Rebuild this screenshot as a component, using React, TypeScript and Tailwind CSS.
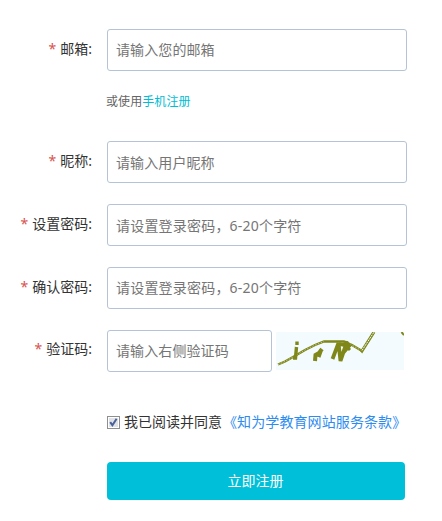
import { useState } from "react";
import type { ReactNode } from "react";

type FieldProps = {
  label: string;
  placeholder: string;
  type?: string;
  inputClass?: string;
  labelClass?: string;
  children?: ReactNode;
};

function Field({
  label,
  placeholder,
  type = "text",
  inputClass = "w-[300px] pb-[2px] tracking-[0.1px]",
  labelClass = "leading-[40px]",
  children,
}: FieldProps) {
  return (
    <div className="flex h-[42px]">
      <label
        className={`${labelClass} w-[92px] mr-[15px] shrink-0 text-right text-sm text-[#333] whitespace-nowrap`}
      >
        <span className="text-[#d9534f] mr-1">*</span>
        {label}:
      </label>
      <input
        type={type}
        placeholder={placeholder}
        className={`${inputClass} h-[42px] shrink-0 rounded-[3px] border border-[#b4c4d4] bg-white pl-2 pr-[9px] text-sm text-[#333] outline-none placeholder:text-[#757575]`}
      />
      {children}
    </div>
  );
}

function Captcha() {
  return (
    <svg
      width="128"
      height="38"
      viewBox="0 0 128 38"
      className="ml-1 mt-0.5 shrink-0 bg-[#f3fbff]"
      fill="none"
      stroke="#7e8718"
    >
      <path d="M2 32.5L9 29.5L17 25L29 18L39 13L48 9.5H68L76 13L86 19" strokeWidth="2.4" />
      <path d="M2 32.5L9 29.5L17 25L29 18L39 13L48 9.5" stroke="#dce4bb" strokeWidth="0.7" strokeDasharray="1.5 1.5" />
      <path d="M74 12L86 19" stroke="#dce4bb" strokeWidth="0.7" strokeDasharray="1.5 1.5" />
      <path d="M85 17.8L86 19L98 0" strokeWidth="3" />
      <path d="M86 18.5L98 0" stroke="#f3fbff" strokeWidth="1" strokeDasharray="2 0.8" />
      <path d="M125.5 0L128 3" strokeWidth="2" />
      <path d="M21 9.5V13M20.5 15L19.5 26H17" strokeWidth="3.4" />
      <path d="M46 17L43 21L39.5 23L39 29M45 18L42.5 25" strokeWidth="4" />
      <path d="M56.5 27L62.5 11L64.5 29L71 10L66 24M63 12L73 14L67 21" strokeWidth="3.8" />
      <path d="M67 11L74 18M71 9L70 14" strokeWidth="3" />
    </svg>
  );
}

export default function App() {
  const [agreed, setAgreed] = useState(true);

  return (
    <form
      className="w-[442px] h-[521px] bg-white pt-[29px] font-['Noto_Sans','Noto_Sans_CJK_SC',sans-serif]"
      onSubmit={(e) => e.preventDefault()}
    >
      <Field label="邮箱" placeholder="请输入您的邮箱" />
      <p className="ml-[106px] h-[70px] text-xs leading-[61px] tracking-[0.08px] text-[#666]">
        或使用
        <a href="#" className="text-[#00bcd4]">
          手机注册
        </a>
      </p>

      <div className="flex flex-col gap-[21px]">
        <Field
          label="昵称"
          placeholder="请输入用户昵称"
          inputClass="w-[300px] tracking-[0.1px]"
        />
        <Field
          label="设置密码"
          type="password"
          placeholder="请设置登录密码，6-20个字符"
          inputClass="w-[300px] tracking-[0.2px]"
        />
        <Field
          label="确认密码"
          type="password"
          placeholder="请设置登录密码，6-20个字符"
          inputClass="w-[300px] pb-[2px] tracking-[0.2px]"
        />
        <Field
          label="验证码"
          placeholder="请输入右侧验证码"
          inputClass="w-[165px] pb-[2px] tracking-[0.1px]"
          labelClass="leading-[38px]"
        >
          <Captcha />
        </Field>
      </div>

      <label className="ml-[107px] mt-10 flex h-5 items-center text-sm leading-5 text-[#333] whitespace-nowrap">
        <input
          type="checkbox"
          checked={agreed}
          onChange={(e) => setAgreed(e.target.checked)}
          className="sr-only"
        />
        <span className="mr-1 flex size-[13px] shrink-0 items-center justify-center border border-[#8e8f8f] bg-white">
          <span className="flex size-[9px] items-center justify-center bg-[#dfe3e8]">
            {agreed && (
              <svg width="9" height="9" viewBox="0 0 9 9" fill="none" stroke="#4a5f97" strokeWidth="2">
                <path d="M1.2 4.2L3.4 7.2L7.6 0.8" />
              </svg>
            )}
          </span>
        </span>
        我已阅读并同意
        <a href="#" className="ml-px text-[#2d8cf0] tracking-[0.1px]">
          《知为学教育网站服务条款》
        </a>
      </label>

      <button
        type="submit"
        className="ml-[107px] mt-[30px] block h-[38px] w-[298px] rounded bg-[#00bfd8] pr-px text-sm text-white"
      >
        立即注册
      </button>
    </form>
  );
}
